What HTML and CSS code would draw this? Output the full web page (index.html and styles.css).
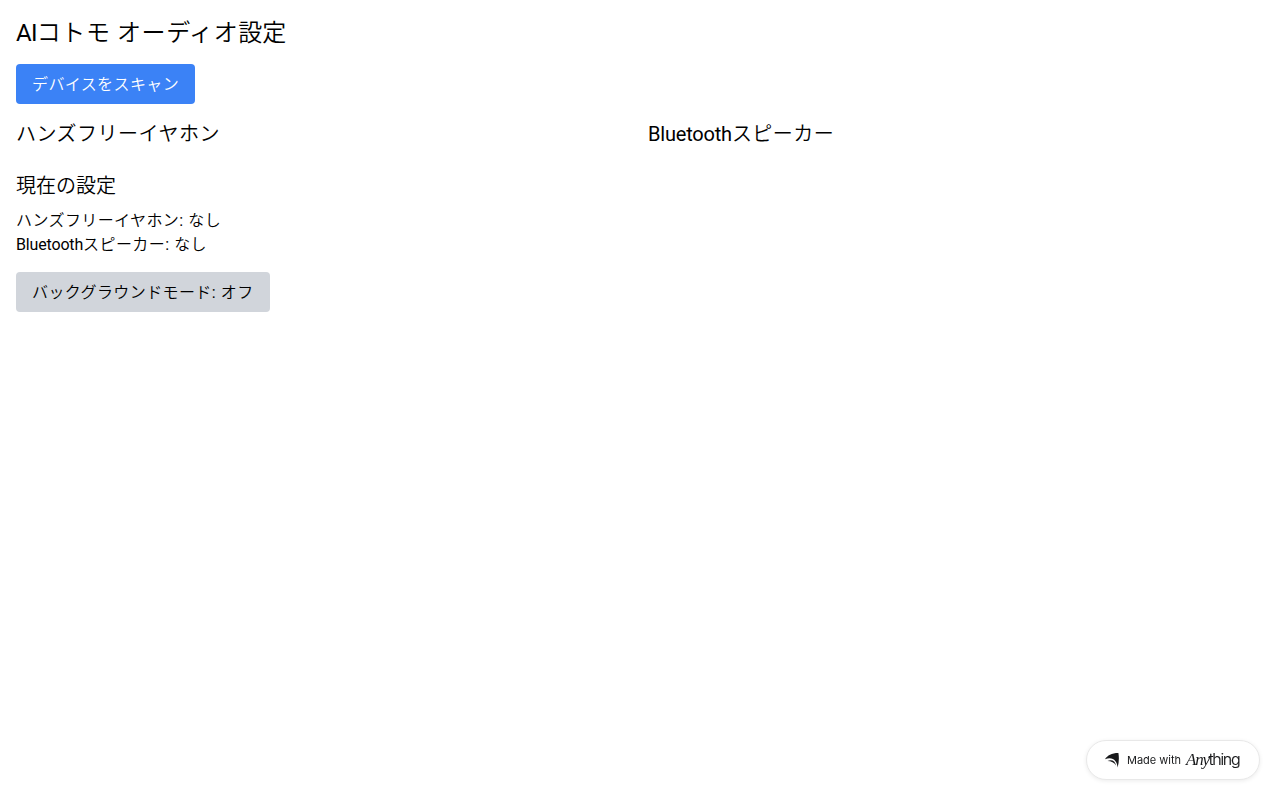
FILE: index.html
```html
<!DOCTYPE html>
<html lang="ja">

<head>
    <meta charset="UTF-8">
    <meta name="viewport" content="width=device-width, initial-scale=1">
    <title>AIコトモ オーディオ設定</title>
    <link rel="stylesheet" href="styles.css">
</head>

<body>
    <div class="main-container">
        <h1><span class="latin">AI</span><span class="kana">コトモ オーディオ</span>設定</h1>
        <button class="scan kana">デバイスをスキャン</button>
        <div class="devices">
            <h2 class="kana">ハンズフリーイヤホン</h2>
            <h2><span class="latin">Bluetooth</span><span class="kana">スピーカー</span></h2>
        </div>
        <div class="current">
            <h2>現在の設定</h2>
            <p><span class="kana">ハンズフリーイヤホン</span><span class="latin">: </span><span class="kana">なし</span></p>
            <p><span class="latin">Bluetooth</span><span class="kana">スピーカー</span><span class="latin">: </span><span class="kana">なし</span></p>
        </div>
        <button class="background-mode"><span class="kana">バックグラウンドモード</span><span class="latin">: </span><span class="kana">オフ</span></button>
    </div>
    <a class="badge" href="#">
        <svg class="badge-icon" width="14" height="15" viewBox="0 0 14 15">
            <path d="M0 6.200C2.500 2.500 6.500 0 13.400 0C14.200 4.500 14 9.500 12.600 14.500C12.200 7.500 7.500 3 0 6.200Z" />
            <path d="M2.500 8C6.800 6 10.200 8 11 12.400C9.300 9.800 6.300 8 2.500 8Z" />
        </svg>
        <span class="made">Made with</span>
        <span class="logo"><i>Any</i><b>thing</b></span>
    </a>
</body>

</html>
```

FILE: styles.css
```css
body,
h1,
h2,
p {
    margin: 0;
    padding: 0;
}

body {
    font-family: Roboto, "Noto Sans CJK JP", sans-serif;
    font-size: 16px;
    line-height: 24px;
    background: #fff;
    color: #000;
}

.main-container {
    padding: 17px 16px 16px;
}

h1,
h2,
p,
button {
    font-weight: 350;
}

h1 {
    font-size: 24px;
    line-height: 32px;
    margin-bottom: 15px;
}

h2 {
    font-size: 20px;
    line-height: 28px;
}

.kana {
    letter-spacing: 0.025em;
}

.latin {
    font-weight: 400;
    letter-spacing: -0.01em;
}

h1 .latin {
    letter-spacing: -0.03em;
}

button {
    display: block;
    font-family: inherit;
    font-size: 16px;
    line-height: 24px;
    border: none;
    border-radius: 4px;
    padding: 9px 16px 7px;
    text-align: left;
    white-space: nowrap;
    cursor: pointer;
}

.scan {
    width: 179px;
    background: #3b82f6;
    color: #fff;
    margin-bottom: 16px;
}

.devices {
    display: grid;
    grid-template-columns: 1fr 1fr;
    gap: 16px;
    margin-bottom: 24px;
}

.current {
    margin-bottom: 15px;
}

.current h2 {
    margin-bottom: 9px;
}

.current p,
.background-mode {
    word-spacing: 1.5px;
}

.background-mode {
    width: 254px;
    background: #d1d5db;
    color: #000;
}

.badge {
    position: fixed;
    right: 20px;
    bottom: 20px;
    width: 174px;
    height: 40px;
    box-sizing: border-box;
    padding: 0 18px;
    display: flex;
    align-items: center;
    border: 1px solid #e8e8e8;
    border-radius: 20px;
    background: #fff;
    box-shadow: 0 1px 4px rgba(0, 0, 0, 0.08);
    color: #18191b;
    text-decoration: none;
    white-space: nowrap;
}

.badge-icon {
    flex: none;
    fill: #18191b;
    margin-right: 8px;
}

.made {
    width: 54px;
    font: 11px/16px Inter, sans-serif;
    margin-right: 5px;
}

.logo {
    display: flex;
    align-items: baseline;
    margin-top: -1px;
}

.logo i {
    font: italic 17px/20px "Liberation Serif", serif;
    letter-spacing: -1.2px;
}

.logo b {
    font: 300 16px/20px Inter, sans-serif;
    letter-spacing: -1.3px;
    -webkit-text-stroke: 0.2px #18191b;
}
```
